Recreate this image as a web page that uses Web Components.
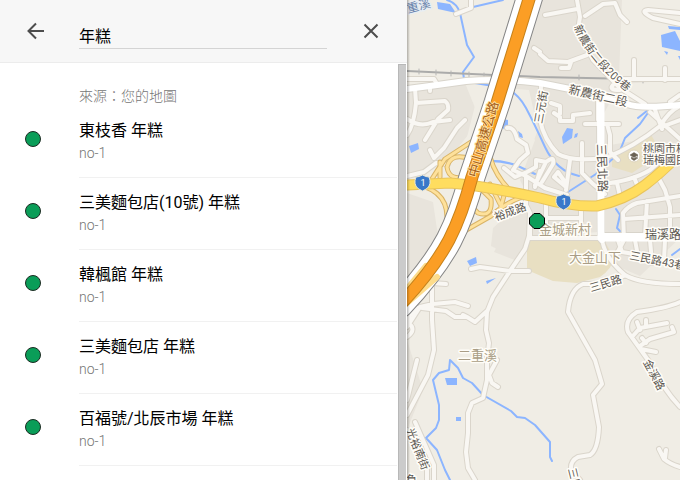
<!DOCTYPE html>
<html lang="zh-Hant">
<head>
<meta charset="utf-8">
<meta name="viewport" content="width=device-width, initial-scale=1">
<title>年糕</title>
<style>
html, body { height: 100%; margin: 0; }
body { font-family: Roboto, "Noto Sans CJK TC", sans-serif; color: #000; overflow: hidden; }
</style>
</head>
<body>
<map-app></map-app>
<script>
class SearchHeader extends HTMLElement {
  constructor() {
    super();
    this.attachShadow({ mode: "open" }).innerHTML = `
<style>
:host { display: block; background: #f7f7f7; border-bottom: 1px solid #ececec; }
form { display: grid; grid-template-columns: 79px 1fr 80px; align-items: start; height: 62px; margin: 0; }
button { appearance: none; border: 0; background: none; padding: 0; margin: 0; height: 62px; display: grid; place-items: center; cursor: pointer; }
.back { padding-right: 8px; }
.clear { padding-left: 8px; }
svg { width: 24px; height: 24px; display: block; fill: none; stroke: #4d4d4d; stroke-width: 2; }
input { appearance: none; box-sizing: border-box; width: 100%; height: 27px; margin: 22px 0 0; padding: 0; border: 0; border-bottom: 1px solid #d4d4d4; border-radius: 0; background: none; font: inherit; font-size: 16px; line-height: 24px; color: #000; outline: 0; }
</style>
<form>
<button class="back" type="button" aria-label="返回"><svg viewBox="0 0 24 24"><path d="M20 12H5M12 4.5L4.500 12L12 19.500"/></svg></button>
<input type="text" aria-label="搜尋" value="年糕">
<button class="clear" type="button" aria-label="清除"><svg viewBox="0 0 24 24"><path d="M5.500 5.500L18.500 18.500M18.500 5.500L5.500 18.500"/></svg></button>
</form>`;
  }
}
customElements.define("search-header", SearchHeader);

class PlaceItem extends HTMLElement {
  constructor() {
    super();
    this.attachShadow({ mode: "open" }).innerHTML = `
<style>
:host { display: grid; grid-template-columns: 79px 1fr; }
.dot { box-sizing: border-box; width: 16px; height: 16px; margin: 25px 0 0 25px; border: 1px solid #1c2b22; border-radius: 50%; background: #0a9d58; }
.body { padding: 13px 0 14px; border-bottom: 1px solid #f1f1f1; min-width: 0; }
.title { font-size: 16px; line-height: 24px; }
.note { font-size: 14px; line-height: 20px; font-weight: 300; color: #757575; }
</style>
<span class="dot"></span>
<div class="body"><div class="title"><slot></slot></div><div class="note"><slot name="note"></slot></div></div>`;
  }
}
customElements.define("place-item", PlaceItem);

class ResultList extends HTMLElement {
  constructor() {
    super();
    this.attachShadow({ mode: "open" }).innerHTML = `
<style>
:host { display: grid; grid-template-columns: 1fr 8px; column-gap: 1px; padding-right: 1px; min-height: 0; overflow: hidden; }
.items { overflow: hidden; padding-top: 23px; }
h2 { margin: 0 0 0 79px; font-size: 14px; line-height: 20px; font-weight: 300; color: #757575; }
.bar { margin-top: 1px; background: #cbcbcb; border: solid #b8b8b8; border-width: 1px 0 0 1px; }
</style>
<div class="items"><h2><slot name="source"></slot></h2><slot></slot></div>
<div class="bar"></div>`;
  }
}
customElements.define("result-list", ResultList);

const WATER = `
<path d="M437 2L450 4L456 13L438 9ZM661 35L675 31L680 41V51L662 47ZM668 26L680 27V30L669 29ZM664 51l4 1l-1 3zM678 56h2v4zM562 137L567 128L573 129L572 138L563 144ZM575 134l3-1l-1 4l-3 1zM409 146L418 143L419 149L411 153ZM467 261L476 257L477 263L470 266ZM486 281L496 278L487 284ZM445 378H457V385H447ZM456 417h5v4h-5zM503 119l5 1v6l-5 3zM518 131l4 3l1 4l-4-1z"/>`;
const STREAMS = `
<path d="M447 0Q457 3 460 13L467 45L474 57L463 72L464 79M473 7L503 0M475 83L505 88Q518 93 526 108T545 147T579 176M568 192L596 174L619 153L625 138L640 124L650 110M485 161Q505 160 520 167L535 174M616 209L620 215L617 228L621 232M648 110L638 118M672 255L680 249M450 360L449 370L439 373L433 380L439 405V420L436 428L426 438L437 450L445 470L450 480M450 360L458 368L463 378L472 383L483 395L511 411L517 417L525 418L535 425L550 442V457L552 461"/>`;
const ROADS = `
<path d="M456 14L471 8V0M407 79H434L437 84M430 85V91M415 88L416 103Q414 125 407 135M416 103L445 101Q449 104 448 110L438 119M438 119L425 140M407 176L424 172L436 163L448 164M407 119Q420 128 433 122L450 120M430 150L434 158L444 148L457 128L465 120
M545 15L577 9M577 0L580 17L578 30L593 60L620 88L645 104M585 16L603 4L615 3L620 15L627 22M680 24L653 18Q639 11 648 10L680 13M634 60V78M540 54L548 61L568 62L587 55M571 62L569 68L561 68M622 79H680M613 85Q608 90 620 90M540 52L534 48M541 86L540 120Q544 140 558 154Q572 162 605 158Q634 147 660 126Q670 110 680 106M554 113L560 117V121H573V115L590 113M551 103L560 106V114M585 124H619M607 124L610 135V152L618 160M598 100V120M654 107L662 129M670 102L680 95M650 112L680 139M664 126L680 120
M582 143V173Q592 184 605 194M570 160L566 190M507 128Q514 126 517 139L526 145L528 153L520 160L513 170L526 176V205L530 213L529 236L525 249L512 268L493 297L487 312L486 330L489 343L487 360V380L483 398L472 403L468 413V433L466 452L468 468L475 480M504 168L515 177L527 172L536 167V160L546 162L535 185M526 176L545 188L567 195M540 171L535 187M546 162Q555 155 553 164L542 182M565 182L558 172L554 177L566 187
M602 184Q632 181 650 170L668 154L680 148M617 183L620 196M634 177L639 190M658 177L665 190L670 207V236M624 240L623 213Q628 206 637 203L680 196M647 201L645 236M624 219L680 215M624 240L615 257M546 202V233M581 211V233M547 218H581M530 226V238H602M407 327L420 307L433 304L455 302L468 306M432 283L446 284M432 284V320L434 350L428 375L407 415M471 269L480 267L510 271L529 271M407 320Q415 305 422 308L446 311L455 317H467L475 322L487 311M407 322Q418 329 407 337M417 360L407 400M497 360L489 375L492 383L498 387M407 430L427 470V480M415 422L434 465V480M602 240Q605 258 625 275Q640 284 680 284M625 275Q610 285 583 284Q570 289 568 312L595 360L602 384L593 395L599 427Q598 450 590 455L578 457Q570 461 571 470L580 480M680 302Q667 308 637 312Q624 320 628 332L648 360Q664 390 680 407M632 337L640 328L667 323M637 322L640 330M646 320V327M640 346L650 339L674 332L672 327M642 338L646 343M641 349L656 352M659 449L664 459Q670 464 680 467M666 450L665 458M618 240L622 252L640 255M635 240L638 256M650 240L652 263M665 240L664 260M463 315L467 317M665 68V80"/>`;
const WIDE = `<path d="M407 89L430 86L466 81Q500 78 540 83L570 89L627 104Q640 109 680 105M600 103L601 236M680 236H602V240"/>`;
const RAMPS = `<path d="M471 142L445 159Q437 171 430 182M470 159Q451 152 447 167Q449 182 468 176M440 162V177M407 183Q447 187 447 217M490 157Q496 178 513 193M478 186L491 199Q493 218 478 213L472 207M461 233L491 216Q505 203 522 197M490 184L500 204M505 192L500 210M407 287L424 264M435 277L407 300"/>`;
const YELLOW = `<path d="M407 185L450 183Q485 186 540 198Q572 207 597 206Q625 200 645 185T690 143"/>`;
const HWY = `<path d="M530 -4L497 103L490 124L472 177Q462 215 449 240Q433 270 400 305"/>`;

class MapCanvas extends HTMLElement {
  constructor() {
    super();
    this.attachShadow({ mode: "open" }).innerHTML = `
<style>
:host { display: block; position: relative; overflow: hidden; background: #f0ede5; }
svg { display: block; width: 100%; height: 100%; }
.line { fill: none; stroke-linecap: round; stroke-linejoin: round; }
text { font-family: Roboto, "Noto Sans CJK TC", sans-serif; font-size: 12px; fill: #5b5751; stroke: #fffdf8; stroke-width: 3px; stroke-linejoin: round; paint-order: stroke; }
.small { font-size: 11px; }
.area { fill: #a99d85; font-size: 13px; }
.hwy { fill: #a4601b; stroke: #ffdf9e; stroke-width: 2px; font-size: 13px; }
.river { fill: #6681aa; stroke: #e9eef3; }
.num { fill: #fff; stroke: none; font-size: 9px; text-anchor: middle; }
.shade { position: absolute; inset: 0 auto 0 0; width: 3px; background: linear-gradient(90deg, #0004, #0000); }
</style>
<svg viewBox="407 0 273 480" preserveAspectRatio="xMinYMin slice" role="img" aria-label="地圖">
<g fill="#e8e4dc">
<path d="M534 0H622L619 77L680 80V238L640 276L607 262L600 232L530 236L507 254L491 246L493 228L528 196L520 180L535 140L505 90Z"/>
<path d="M407 88L465 83L480 120L452 155L407 178ZM407 193L433 202L440 250L407 290ZM407 340L423 390L407 430Z"/>
<path d="M503 235L529 240L520 262L494 252Z"/>
</g>
<path fill="#f0ede5" d="M620 84L680 80V105L640 140L610 145L603 115ZM529 90L480 86L465 145L520 174L538 130Z"/>
<g fill="#e8dfc2"><path d="M527 240H604L614 258Q612 269 600 277L577 283L553 281L527 270ZM650 133L612 159V167L632 173L650 161L657 145Z"/></g>
<g fill="#8cb5ff">${WATER}</g>
<g class="line" stroke="#8cb5ff" stroke-width="2">${STREAMS}</g>
<g class="line"><path d="M407 71L540 77L680 80" stroke="#ababaa" stroke-width="2"/><path d="M419 69v5M436 70v5M451 71v5M469 72v5M484 73v5M579 75v5M643 78v5" stroke="#b5b5b4"/></g>
<g class="line" stroke="#dad5cb" stroke-width="6">${ROADS}</g>
<g class="line" stroke="#d8d4cb" stroke-width="8">${WIDE}</g>
<g class="line" stroke="#f9f7f3" stroke-width="4">${ROADS}</g>
<g class="line" stroke="#fff" stroke-width="6">${WIDE}</g>
<path class="line" d="M601 104V238H680" stroke="#fff" stroke-width="7"/>
<g class="line" stroke="#d9b467" stroke-width="5">${RAMPS}</g>
<g class="line" stroke="#fee19b" stroke-width="3">${RAMPS}</g>
<g class="line" stroke="#858585" stroke-width="27">${HWY}</g>
<g class="line" stroke="#fff" stroke-width="25">${HWY}</g>
<path class="line" d="M407 289L426 266M437 277L407 303" stroke="#fddc8b" stroke-width="6"/>
<g class="line" stroke="#e9c45b" stroke-width="11">${YELLOW}</g>
<g class="line" stroke="#ffdd5f" stroke-width="9">${YELLOW}</g>
<g class="line" stroke="#c5821c" stroke-width="13">${HWY}</g>
<g class="line" stroke="#fb9e25" stroke-width="11">${HWY}</g>
<defs>
<path id="lane209" d="M574 27Q589 64 635 98"/>
</defs>
<text class="river" transform="translate(408 13) rotate(-14)">重溪</text>
<text class="small"><textPath href="#lane209">新農街二段209巷</textPath></text>
<text transform="translate(568 93) rotate(13)">新農街二段</text>
<text class="small" transform="translate(542 124) rotate(-80)">三元街</text>
<text class="hwy" transform="translate(477 178) rotate(-74)">中山高速公路</text>
<text transform="translate(597 144) rotate(88)">三民北路</text>
<text class="small" transform="translate(496 221) rotate(-20)">裕成路</text>
<text class="small" x="643" y="153">桃園市楊梅區</text>
<text class="small" x="643" y="164">瑞梅國民小學</text>
<text class="area" x="539" y="234">金城新村</text>
<text class="area" x="569" y="262">大金山下</text>
<text class="area" x="458" y="360">二重溪</text>
<text x="645" y="239">瑞溪路</text>
<text class="small" transform="translate(629 259) rotate(11)">三民路43巷</text>
<text class="small" transform="translate(591 292) rotate(-17)">三民路</text>
<text class="small" transform="translate(643 362) rotate(62)">金溪路</text>
<text class="small" transform="translate(406 430) rotate(68)">光裕南街</text>
<text class="small" transform="translate(568 469) rotate(76)">三民路</text>
<text class="small" x="406" y="484">負</text>
<circle cx="634" cy="156" r="6" fill="#fff" stroke="#ddd4bd"/>
<path d="M630 155L634 152.500L638 155L634 157.500ZM631.500 157V159L634 160.500L636.500 159V157L634 158.500ZM637.500 155V159" fill="#6b6254" stroke="#6b6254" stroke-width=".5"/>
<g fill="#3978c9" stroke="#e9e7d7"><path d="M416 177Q419 177 422.500 175Q426 177 429 177Q432 184 427 188.500L422.500 191L418 188.500Q413 184 416 177Z"/><path d="M557 196Q560 196 563.500 194Q567 196 570 196Q573 203 568 207.500L563.500 210L559 207.500Q554 203 557 196Z"/></g>
<text class="num" x="423" y="186">1</text><text class="num" x="564" y="205">1</text>
<path d="M534 213.500H540L544.500 218V224L540 228.500H534L529.500 224V218Z" fill="#0a9d58" stroke="#000"/>
</svg>
<div class="shade"></div>`;
  }
}
customElements.define("map-canvas", MapCanvas);

class MapApp extends HTMLElement {
  constructor() {
    super();
    this.attachShadow({ mode: "open" }).innerHTML = `
<style>
:host { display: grid; grid-template-columns: minmax(240px, 407px) minmax(0, 1fr); height: 100vh; background: #fff; }
aside { display: grid; grid-template-rows: auto minmax(0, 1fr); min-height: 0; }
map-canvas { min-height: 0; }
</style>
<aside>
<search-header></search-header>
<result-list>
<span slot="source">來源：您的地圖</span>
<place-item>東枝香 年糕<span slot="note">no-1</span></place-item>
<place-item>三美麵包店(10號) 年糕<span slot="note">no-1</span></place-item>
<place-item>韓楓館 年糕<span slot="note">no-1</span></place-item>
<place-item>三美麵包店 年糕<span slot="note">no-1</span></place-item>
<place-item>百福號/北辰市場 年糕<span slot="note">no-1</span></place-item>
</result-list>
</aside>
<map-canvas></map-canvas>`;
  }
}
customElements.define("map-app", MapApp);
</script>
</body>
</html>
